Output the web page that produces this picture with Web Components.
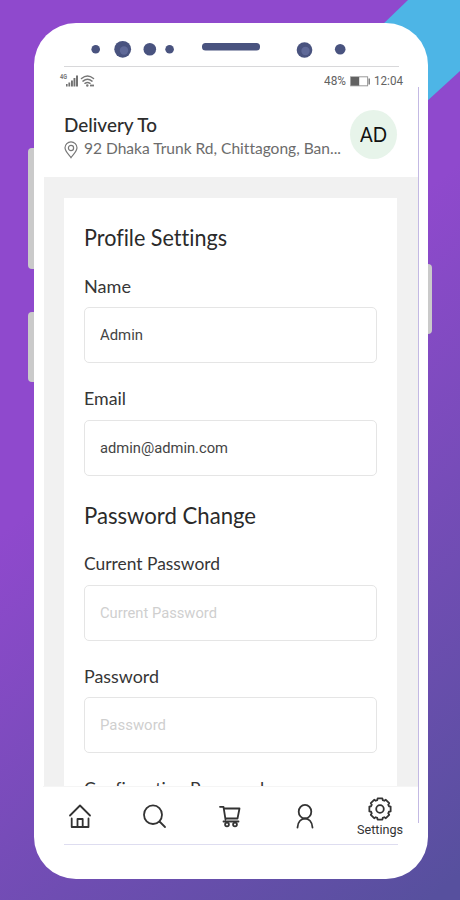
<!DOCTYPE html>
<html lang="en"><head><meta charset="utf-8"><title>Profile Settings</title>
<style>
body{margin:0;width:460px;height:900px;overflow:hidden;font-family:Lato,"Noto Sans",sans-serif;font-variant-ligatures:none;color:#2d2d2d}
</style></head><body>
<phone-scene>
  <status-bar></status-bar>
  <delivery-header></delivery-header>
  <settings-panel>
    <section-title w="143">Profile Settings</section-title>
    <form-field label="Name" w="47" value="Admin" vw="43"></form-field>
    <form-field label="Email" w="42" value="admin@admin.com" vw="128"></form-field>
    <section-title w="172">Password Change</section-title>
    <form-field label="Current Password" w="136" hint="Current Password" vw="117"></form-field>
    <form-field label="Password" w="75" hint="Password" vw="66"></form-field>
    <form-field label="Confirmation Password" w="180"></form-field>
  </settings-panel>
  <nav-bar></nav-bar>
</phone-scene>
<script>
function define(name, html, setup){
  customElements.define(name, class extends HTMLElement{
    connectedCallback(){
      if(this.shadowRoot) return;
      const t=document.createElement('template');
      t.innerHTML=typeof html==='function'?html(this):html;
      this.attachShadow({mode:'open'}).appendChild(t.content.cloneNode(true));
      if(setup) setup(this);
    }
  });
}

define('phone-scene',`<style>
:host{display:flex;position:relative;box-sizing:border-box;width:460px;height:900px;padding:23px 32px 21px 34px;background:linear-gradient(141deg,#8f49cd 42%,#57509e 98%);overflow:hidden}
.back{position:absolute;inset:0}
.body{position:relative;flex:1;box-sizing:border-box;border-radius:42px;background:#fff;display:flex;flex-direction:column}
.sensors{display:block;height:43px;flex:none}
.screen{height:778px;width:374px;margin-left:10px;display:flex;flex-direction:column;position:relative}
.rim{position:absolute;left:-10px;top:-43px;pointer-events:none}
</style>
<svg class="back" width="460" height="900"><path d="M408 0H460V71L380 144V27Z" fill="#4db5e6"/>
<g fill="#cacaca"><rect x="28" y="148" width="14" height="121" rx="4"/><rect x="28" y="312" width="14" height="70" rx="4"/><rect x="420" y="264" width="12" height="70" rx="4"/></g></svg>
<div class="body">
<svg class="sensors" width="394" height="43" fill="#49537f"><circle cx="61.7" cy="26.3" r="4.3"/><circle cx="88.7" cy="26.3" r="8.4"/><circle cx="90" cy="27.5" r="4.2" fill="#5f6998"/><circle cx="115.8" cy="26.3" r="6.3"/><circle cx="135.6" cy="26.3" r="4.3"/><rect x="168" y="20" width="58" height="7.5" rx="3.5"/><circle cx="270.5" cy="27" r="7.8"/><circle cx="271.5" cy="28" r="4.2" fill="#5f6998"/><circle cx="306.2" cy="26.3" r="5.3"/></svg>
<div class="screen"><slot></slot>
<svg class="rim" width="394" height="856"><path d="M30 43.5H365" stroke="#d8d8da"/><path d="M30 821.5H364" stroke="#deddf0"/><path d="M384.5 64V800" stroke="#c3b9e3"/></svg></div>
</div>`);

define('fit-text',`<style>:host{display:block;flex:none;white-space:nowrap;height:1.3em;line-height:1.3}span{display:inline-block;transform-origin:0 50%}</style><span><slot></slot></span>`,el=>{
  const w=+el.getAttribute('w'),s=el.shadowRoot.querySelector('span');
  el.style.width=w+'px';
  s.style.transform='scaleX('+(w/s.getBoundingClientRect().width)+')';
});

define('status-bar',`<style>:host{display:flex;align-items:center;height:30px;padding:0 15px 0 15px;font-family:Roboto,sans-serif;font-size:12.5px;color:#626262;flex:none}
.gap{flex:1}svg{flex:none}fit-text.p{margin-right:4px}fit-text.t{margin-left:4px}</style>
<svg width="38" height="16" viewBox="0 0 38 16"><text x="1" y="6" font-size="7" font-weight="700" fill="#777" textLength="7" lengthAdjust="spacingAndGlyphs">4G</text><g fill="#727272"><rect x="7" y="11" width="1.6" height="2.5"/><rect x="9.4" y="9.500" width="1.8" height="4"/><rect x="12" y="7.500" width="1.9" height="6"/><rect x="14.5" y="5" width="1.9" height="8.5"/><rect x="17" y="2.500" width="2" height="11"/></g>
<g fill="none" stroke="#777" stroke-width="1.5" stroke-linecap="round"><path d="M22.500 5.500Q28.500 .7 34.500 5.500M24 8.100Q28.500 4.500 33 8.100M26 10.300Q28.500 8.700 31 10.300"/></g><circle cx="28.3" cy="12.500" r="1.2" fill="#777"/><path d="M31 12.500h4" stroke="#777" stroke-width="1.8"/></svg>
<div class="gap"></div><fit-text class="p" w="22">48%</fit-text><svg width="20" height="11"><rect x=".6" y=".8" width="17" height="9" fill="#fff" stroke="#999"/><rect x="1" y="1" width="8.2" height="8.6" fill="#626262"/><path d="M19.2 2.5v6" stroke="#777" stroke-width="1.4"/></svg><fit-text class="t" w="29">12:04</fit-text>`);

define('delivery-header',`<style>:host{display:flex;height:81px;flex:none;box-sizing:border-box;padding:14px 21px 0 20px;justify-content:space-between}
.left{padding-top:4px}.title{font-size:18.4px;font-weight:500;color:#2d2d2d}.row{display:flex;gap:6px;align-items:center;font-size:15.4px;color:#6c6c6c;margin-top:0}svg{display:block;margin-top:3px}
.avatar{width:47px;height:49px;border-radius:50%;background:#e7f4ea;display:flex;align-items:center;justify-content:center;font-size:22px;color:#111}</style>
<div class="left"><fit-text class="title" w="93">Delivery To</fit-text><div class="row"><svg width="14" height="18" viewBox="0 0 14 18" fill="none" stroke="#777" stroke-width="1.2"><path d="M7 16.7C5.5 14.4 1 10.4 1 6.8a6 6 0 0 1 12 0c0 3.6-4.500 7.600-6 9.900Z"/><circle cx="7" cy="7" r="2.600"/></svg><fit-text w="257">92 Dhaka Trunk Rd, Chittagong, Ban...</fit-text></div></div>
<div class="avatar"><fit-text w="27">AD</fit-text></div>`);

define('settings-panel',`<style>:host{display:block;height:609px;flex:none;box-sizing:border-box;background:#f1f1f1;padding:21px 21px 0 19.500px;overflow:hidden}
.card{height:800px;box-sizing:border-box;background:#fff;padding:25px 20.500px 0 20.500px}</style><div class="card"><slot></slot></div>`);

define('section-title',el=>`<style>:host{display:block;height:52.500px;font-size:22.5px;color:#2a2a2a}</style><fit-text w="${el.getAttribute('w')}">${el.textContent}</fit-text>`);

define('form-field',el=>{
  const v=el.getAttribute('value'),h=el.getAttribute('hint');
  return `<style>:host{display:block;height:112.500px}
.label{font-size:16.800px;color:#363636}
.box{margin-top:10px;height:56px;box-sizing:border-box;border:1.500px solid #e5e5e5;border-radius:5px;display:flex;align-items:center;padding:2px 0 0 14.500px;font-size:15.300px;font-family:Roboto,sans-serif;color:#444}
.box.hint{color:#cfcfcf}</style>
<fit-text class="label" w="${el.getAttribute('w')}">${el.getAttribute('label')}</fit-text>`+
(v||h?`<div class="box ${h?'hint':''}"><fit-text w="${el.getAttribute('vw')}">${v||h}</fit-text></div>`:'');
});

define('nav-bar',`<style>:host{display:grid;grid-template-columns:repeat(5,75px);height:58px;flex:none;background:#fff;border-top:1px solid #f5f5f5;box-sizing:border-box;width:375px;margin-left:-1.500px;align-items:center;justify-items:center;font:12.800px/1 Roboto,sans-serif;color:#333}
svg{display:block;fill:none;stroke:#333;stroke-width:1.800;stroke-linecap:round;stroke-linejoin:round}
.s{display:flex;flex-direction:column;align-items:center;padding-top:4px}.s fit-text{margin-top:1px}</style>
<svg width="24" height="26" viewBox="0 0 24 26"><path d="M2 12.500 12 2.500 22 12.500M3.700 15.500V24H20.500V15.500M9.500 23.500V16H14.700V23.500"/></svg>
<svg width="26" height="26" viewBox="0 0 26 26"><ellipse cx="11" cy="11.700" rx="9" ry="9.300"/><path d="m17.500 18.500 5.500 5.500"/></svg>
<svg width="26" height="26" viewBox="0 0 26 26"><path d="M3 3.800H6.500L8.500 16.500M7 5.500H22.500L20.500 15.500H8.500M6.500 18.500H21.500"/><circle cx="10" cy="21.500" r="1.900"/><circle cx="18" cy="21.500" r="1.900"/></svg>
<svg width="22" height="26" viewBox="0 0 22 26"><ellipse cx="11" cy="8.700" rx="6.300" ry="6.800"/><path d="M3.500 24.500C4 12.500 18 12.500 18.500 24.500"/></svg>
<div class="s"><svg width="24" height="24" viewBox="0 0 24 24"><path id="g"/><circle cx="12" cy="12" r="3.800"/></svg><fit-text w="46">Settings</fit-text></div>`,el=>{
  let d='';
  for(let i=0;i<8;i++){
    [[-.22,10.900],[.22,10.900],[.30,9.300],[.485,9.300]].forEach(([o,r],k)=>{const a=i*Math.PI/4+o;d+=(i+k?'L':'M')+(12+Math.sin(a)*r).toFixed(2)+' '+(12-Math.cos(a)*r).toFixed(2);});
  }
  el.shadowRoot.getElementById('g').setAttribute('d',d+'Z');
});
</script></body></html>
